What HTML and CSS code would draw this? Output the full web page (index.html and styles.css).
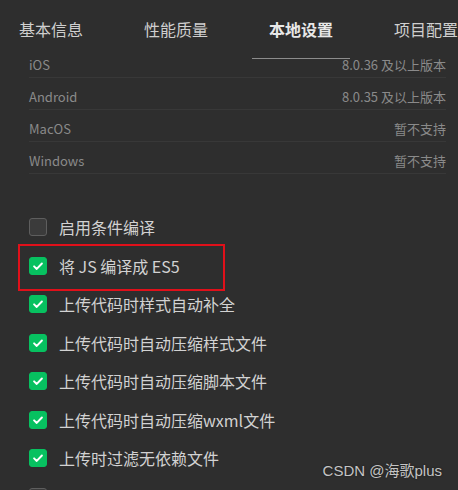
FILE: index.html
```html
<!DOCTYPE html>
<html lang="zh-CN">
<head>
  <meta charset="UTF-8">
  <meta name="viewport" content="width=device-width, initial-scale=1.0">
  <title>本地设置</title>
  <link rel="stylesheet" href="styles.css">
</head>
<body>
  <nav class="tabs">
    <div class="tab">基本信息</div>
    <div class="tab">性能质量</div>
    <div class="tab active">本地设置</div>
    <div class="tab">项目配置</div>
  </nav>

  <div class="versions">
    <div class="row"><span>iOS</span><span>8.0.36 及以上版本</span></div>
    <div class="row"><span>Android</span><span>8.0.35 及以上版本</span></div>
    <div class="row"><span>MacOS</span><span>暂不支持</span></div>
    <div class="row"><span>Windows</span><span>暂不支持</span></div>
  </div>

  <ul class="options">
    <li class="option"><span class="box"></span>启用条件编译</li>
    <li class="option marked"><span class="box on"><svg viewBox="0 0 18 18"><polyline points="4.6,9.4 7.6,12.3 13.4,6.2"/></svg></span>将 JS 编译成 ES5</li>
    <li class="option"><span class="box on"><svg viewBox="0 0 18 18"><polyline points="4.6,9.4 7.6,12.3 13.4,6.2"/></svg></span>上传代码时样式自动补全</li>
    <li class="option"><span class="box on"><svg viewBox="0 0 18 18"><polyline points="4.6,9.4 7.6,12.3 13.4,6.2"/></svg></span>上传代码时自动压缩样式文件</li>
    <li class="option"><span class="box on"><svg viewBox="0 0 18 18"><polyline points="4.6,9.4 7.6,12.3 13.4,6.2"/></svg></span>上传代码时自动压缩脚本文件</li>
    <li class="option"><span class="box on"><svg viewBox="0 0 18 18"><polyline points="4.6,9.4 7.6,12.3 13.4,6.2"/></svg></span>上传代码时自动压缩wxml文件</li>
    <li class="option"><span class="box on"><svg viewBox="0 0 18 18"><polyline points="4.6,9.4 7.6,12.3 13.4,6.2"/></svg></span>上传时过滤无依赖文件</li>
    <li class="option"><span class="box"></span></li>
  </ul>

  <div class="watermark">CSDN @海歌plus</div>
</body>
</html>
```

FILE: styles.css
```css
body {
  margin: 0;
  width: 458px;
  height: 490px;
  overflow: hidden;
  position: relative;
  background-color: #2e2e2e;
  font-family: "Noto Sans CJK SC", "Noto Sans", sans-serif;
}
.tabs {
  display: flex;
  gap: 61px;
  padding: 18px 0 0 19px;
  white-space: nowrap;
}
.tab {
  position: relative;
  flex-shrink: 0;
  font-size: 16px;
  line-height: 22px;
  color: #cfcfcf;
}
.tab.active {
  color: #e8e8e8;
  font-weight: bold;
}
.tab.active::after {
  content: "";
  position: absolute;
  left: -17px;
  right: -17px;
  top: 40px;
  height: 1px;
  background-color: #8c8c8c;
}
.versions {
  margin: 6px 12px 0 29px;
}
.row {
  display: flex;
  justify-content: space-between;
  height: 32px;
  box-sizing: border-box;
  padding-top: 9px;
  border-bottom: 1px solid #383838;
  font-size: 13px;
  line-height: 20px;
  color: #8a8a8a;
}
.options {
  list-style: none;
  margin: 34px 0 0;
  padding: 0 0 0 29px;
}
.option {
  position: relative;
  display: flex;
  align-items: center;
  gap: 12px;
  height: 38.5px;
  font-size: 16px;
  color: #d2d2d2;
}
.option.marked::after {
  content: "";
  position: absolute;
  left: -11px;
  top: -3px;
  width: 203px;
  height: 43px;
  border: 2px solid #e0101a;
}
.box {
  width: 18px;
  height: 18px;
  box-sizing: border-box;
  border: 1px solid #5e5e5e;
  border-radius: 3px;
  background-color: #3b3b3b;
}
.box.on {
  border-color: #07c160;
  background-color: #07c160;
}
.box svg {
  display: block;
  width: 16px;
  height: 16px;
  fill: none;
  stroke: #ffffff;
  stroke-width: 2.2;
  stroke-linecap: round;
  stroke-linejoin: round;
}
.watermark {
  position: absolute;
  right: 16px;
  top: 460px;
  font-family: "Liberation Sans", "Noto Sans CJK SC", sans-serif;
  font-size: 15px;
  line-height: 22px;
  color: #c4c4c4;
  text-shadow: 0 0 2px #1a1a1a;
}
```
